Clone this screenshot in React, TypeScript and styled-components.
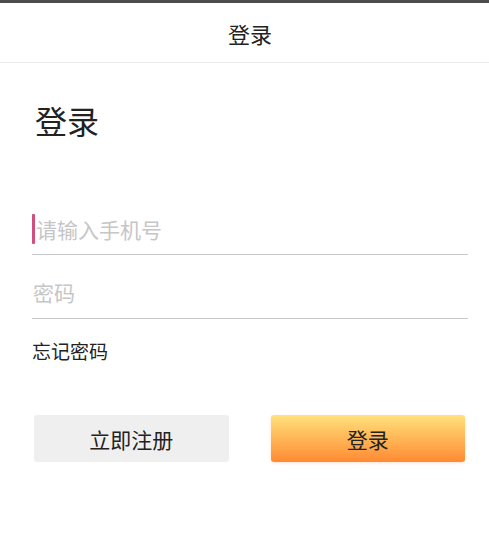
import styled, { createGlobalStyle } from "styled-components";

const GlobalStyle = createGlobalStyle`
  body {
    margin: 0;
    background: #ffffff;
    font-family: "Noto Sans CJK SC", "Noto Sans", sans-serif;
    color: #222;
  }
`;

const App = () => {
  return (
    <Page>
      <GlobalStyle />
      <StatusStrip />
      <Header>登录</Header>
      <Content>
        <PageTitle>登录</PageTitle>
        <Field>
          <Caret />
          <Input type="tel" placeholder="请输入手机号" />
        </Field>
        <Field>
          <Input type="password" placeholder="密码" />
        </Field>
        <ForgotLink>忘记密码</ForgotLink>
        <ButtonRow>
          <Button>立即注册</Button>
          <Button $primary>登录</Button>
        </ButtonRow>
      </Content>
    </Page>
  );
};

export default App;

const Page = styled.div`
  width: 489px;
  min-height: 549px;
  background: #fff;
`;

const StatusStrip = styled.div`
  height: 3px;
  background: #4d4d4d;
`;

const Header = styled.div`
  height: 59px;
  display: flex;
  align-items: center;
  justify-content: center;
  padding-left: 11px;
  font-size: 22px;
  color: #222;
  border-bottom: 1px solid #ececec;
`;

const Content = styled.div`
  padding: 0 21px 0 32px;
`;

const PageTitle = styled.h1`
  margin: 37px 0 0 3px;
  font-size: 32px;
  font-weight: 400;
  line-height: 40px;
  color: #222;
`;

const Field = styled.div`
  display: flex;
  align-items: center;
  height: 64px;
  padding-top: 22px;
  padding-bottom: 11px;
  box-sizing: border-box;
  border-bottom: 1px solid #c9c9c9;
  &:first-of-type {
    height: 63px;
    margin-top: 52px;
  }
`;

const Caret = styled.span`
  width: 3px;
  height: 30px;
  background: #d24f7c;
  border-radius: 1px;
  flex: none;
`;

const Input = styled.input`
  flex: 1;
  min-width: 0;
  height: 30px;
  padding: 0 0 0 1px;
  border: none;
  outline: none;
  background: transparent;
  font-family: "Noto Sans CJK SC", sans-serif;
  font-size: 21px;
  color: #222;
  &::placeholder {
    color: #c6c6c6;
  }
`;

const ForgotLink = styled.div`
  margin-top: 19px;
  font-size: 19px;
  line-height: 26px;
  color: #222;
`;

const ButtonRow = styled.div`
  display: grid;
  grid-template-columns: 1fr 1fr;
  gap: 42px;
  margin: 51px 3px 0 2px;
`;

const Button = styled.button<{ $primary?: boolean }>`
  height: 47px;
  border: none;
  border-radius: 3px;
  font-family: "Noto Sans CJK SC", sans-serif;
  font-size: 21px;
  color: #222;
  background: ${({ $primary }) =>
    $primary ? "linear-gradient(180deg, #ffe27e 0%, #ffb656 50%, #ff8a33 100%)" : "#efeff0"};
  box-shadow: ${({ $primary }) =>
    $primary ? "0 1px 3px rgba(255, 140, 50, 0.25)" : "none"};
`;
